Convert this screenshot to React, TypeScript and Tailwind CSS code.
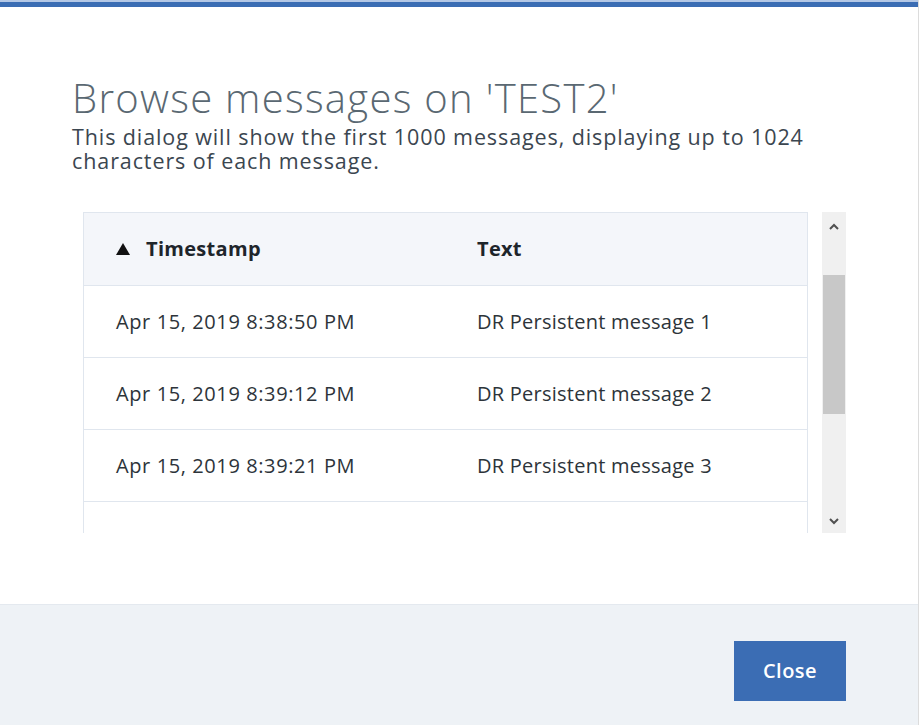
import React from "react";

const rows = [
  { ts: "Apr 15, 2019 8:38:50 PM", text: "DR Persistent message 1" },
  { ts: "Apr 15, 2019 8:39:12 PM", text: "DR Persistent message 2" },
  { ts: "Apr 15, 2019 8:39:21 PM", text: "DR Persistent message 3" },
  { ts: "", text: "" },
];

export default function App() {
  return (
    <div
      className="w-[919px] h-[725px] bg-white flex flex-col border-r border-[#dcdcdc] overflow-hidden"
      style={{ fontFamily: '"Open Sans", "Noto Sans", sans-serif' }}
    >
      <div className="h-[2px] bg-[#b4c8e6]" />
      <div className="h-[5px] bg-[#3b6db4]" />
      <div className="flex-1 flex flex-col pl-[72px] pt-[68px]">
        <h1 className="text-[40px] leading-[46px] font-light text-[#5a6872] tracking-[1.3px] whitespace-nowrap">
          Browse messages on 'TEST2'
        </h1>
        <p className="mt-[4px] text-[21.5px] leading-[24px] text-[#3b4650] tracking-[0.9px] w-[770px]">
          This dialog will show the first 1000 messages, displaying up to 1024 characters of each message.
        </p>
        <div className="flex mt-[39px] ml-[11px] h-[321px]">
          <div className="w-[725px] h-full overflow-hidden border-l border-r border-t border-[#e0e6ee]">
            <div className="h-[73px] bg-[#f4f6fa] border-b border-[#e0e6ee] flex items-center text-[20px] font-bold text-[#1e252b] tracking-[0.3px]">
              <div className="w-[393px] pl-[32px] flex items-center">
                <svg width="14" height="12" viewBox="0 0 14 12" className="mr-[16px]">
                  <path d="M7 0 L14 12 L0 12 Z" fill="#111" />
                </svg>
                <span>Timestamp</span>
              </div>
              <div>Text</div>
            </div>
            {rows.map((r, i) => (
              <div
                key={i}
                className="h-[72px] border-b border-[#e0e6ee] flex items-center text-[20px] text-[#2d343a]"
              >
                <div className="w-[393px] pl-[32px] tracking-[0.6px]">{r.ts}</div>
                <div className="tracking-[0.25px]">{r.text}</div>
              </div>
            ))}
          </div>
          <div className="ml-[14px] w-[24px] h-full bg-[#f0f0f0] flex flex-col items-center">
            <div className="h-[26px] w-full flex items-center justify-center mt-[1px]">
              <svg width="10" height="7" viewBox="0 0 10 7">
                <path d="M1 6 L5 2 L9 6" stroke="#505050" strokeWidth="2" fill="none" />
              </svg>
            </div>
            <div className="mt-[36px] w-[22px] h-[139px] bg-[#c8c8c8]" />
            <div className="flex-1" />
            <div className="h-[24px] w-full flex items-center justify-center">
              <svg width="10" height="7" viewBox="0 0 10 7">
                <path d="M1 1 L5 5 L9 1" stroke="#505050" strokeWidth="2" fill="none" />
              </svg>
            </div>
          </div>
        </div>
      </div>
      <div className="h-[121px] bg-[#eef2f6] border-t border-[#e4e9ef] flex justify-end items-start pt-[36px] pr-[72px]">
        <button className="w-[112px] h-[60px] bg-[#3b6db4] text-white text-[20px] font-semibold tracking-[0.5px]">
          Close
        </button>
      </div>
    </div>
  );
}
